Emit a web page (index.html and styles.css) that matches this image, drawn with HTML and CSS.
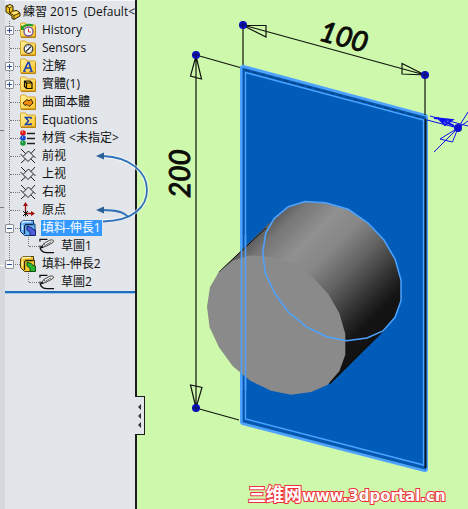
FILE: index.html
```html
<!DOCTYPE html>
<html lang="zh-Hant">
<head>
<meta charset="utf-8">
<title>練習 2015</title>
<link rel="stylesheet" href="styles.css">
</head>
<body>
<svg class="defs" aria-hidden="true">
  <defs>
    <linearGradient id="gold" x1="0" y1="0" x2="1" y2="1">
      <stop offset="0" stop-color="#fff3a0"/><stop offset="1" stop-color="#f8c526"/>
    </linearGradient>
    <symbol id="folder" viewBox="0 0 16 16">
      <path d="M.5 14.500V2Q.5 1 1.500 1H5.500L7 3H14.500Q15.500 3 15.500 4V14.500Z" fill="url(#gold)" stroke="#dba52a"/>
      <path d="M1 15.500H15.500V5" fill="none" stroke="#b9810e"/>
    </symbol>
    <symbol id="plane" viewBox="0 0 16 16">
      <path d="M8.500 3L13.500 8L8 13.500L3 8.500ZM1 1L5.800 5.800M10.800 10.800L15 15M15 1L11 5.500M5.500 11L1 15M3 8.500L.5 6M13.500 8L15.500 10" fill="none" stroke="#222" stroke-width="1"/>
    </symbol>
    <symbol id="sketch" viewBox="0 0 17 16">
      <path d="M9 1H1V3.500M1 7.500C1 12 3 15 8 15H16" fill="none" stroke="#111" stroke-width="1.300"/>
      <path d="M2.500 9.500L5 5.500L11.500 1.800Q14.500 .8 15.500 2.500L14.500 4.500L7 8.500Z" fill="#f7f7f7" stroke="#222" stroke-width=".9"/>
      <path d="M5 5.500L7 8.500M7 7L13 3.500" stroke="#333" stroke-width=".8"/>
      <path d="M1 11L3 7.500L5 9.500Z" fill="#111"/>
    </symbol>
  </defs>
</svg>
<div class="app">
  <aside class="panel">
    <div class="gutter"><i class="tick tick-a"></i><i class="tick tick-b"></i><i class="tick tick-c"></i></div>
    <nav class="tree">
      <div class="root">
        <svg class="icon" viewBox="0 0 16 16"><path d="M1 2L5 .5L8 2V7L12 6.500L15 9V12L9 15.500L7 14.500V12L1 8Z" fill="#f2c21c" stroke="#33290a"/><path d="M1 2L4.500 4V9L9 11.500L15 9M4.500 4L8 2M9 11.500V15M4.500 9L8 7" fill="none" stroke="#4b3a05"/><path d="M5 1.500L7 2.300L5 3.300L3 2.300ZM8.500 8L12 7.500L13 9L9 10.500L7 9Z" fill="#ffe985"/></svg>
        <span>練習 2015&nbsp; (Default&lt;</span>
      </div>
      <ul class="branch">
        <li><div class="row"><button class="toggle plus" aria-label="History"></button><svg class="icon" viewBox="0 0 16 16"><use href="#folder"/><circle cx="8.500" cy="9.500" r="4.500" fill="#fff" stroke="#7d55a5" stroke-width="1.400"/><path d="M8.500 6.500V10H11" fill="none" stroke="#d03030"/><path d="M2 6Q6 1 13 3.500" fill="none" stroke="#249a2c" stroke-width="2"/><path d="M1 3V8H5Z" fill="#249a2c"/></svg><span>History</span></div></li>
        <li><div class="row"><svg class="icon" viewBox="0 0 16 16"><use href="#folder"/><circle cx="8.500" cy="9" r="4.300" fill="#fff" stroke="#444" stroke-width="1.300"/><path d="M6 11.500L11 6.500" stroke="#333" stroke-width="1.500"/><path d="M6 7H7M8 6H9M10.500 10H11.500" stroke="#348ab0"/></svg><span>Sensors</span></div></li>
        <li><div class="row"><button class="toggle plus" aria-label="注解"></button><svg class="icon" viewBox="0 0 16 16"><use href="#folder"/><path d="M4 13L8 4.500H9L11.500 13M6 10H10.500" fill="none" stroke="#173cb4" stroke-width="1.600"/><path d="M3 13.300H6M9.500 13.300H13" stroke="#173cb4"/></svg><span>注解</span></div></li>
        <li><div class="row"><button class="toggle plus" aria-label="實體"></button><svg class="icon" viewBox="0 0 16 16"><use href="#folder"/><path d="M4.500 5H10L12 7V12.500H6.500L4.500 10.500ZM6.500 7H12M6.500 7V12.500M4.500 5L6.500 7" fill="#f5bd18" stroke="#171204" stroke-width="1.200"/></svg><span>實體(1)</span></div></li>
        <li><div class="row"><svg class="icon" viewBox="0 0 16 16"><use href="#folder"/><path d="M3 9L7 5.500L9 7L11 5L13 9L9 12.500L7 10.500L5 11.500Z" fill="#f38d0d" stroke="#3b2203"/></svg><span>曲面本體</span></div></li>
        <li><div class="row"><svg class="icon" viewBox="0 0 16 16"><use href="#folder"/><path d="M11 7V5.500H5.500L8.500 9L5.500 12.500H11V11" fill="none" stroke="#173cb4" stroke-width="1.500"/></svg><span>Equations</span></div></li>
        <li><div class="row"><svg class="icon" viewBox="0 0 16 16"><path d="M7 3.500H15M7 8.500H15M7 13.500H15" stroke="#222" stroke-width="1.400"/><circle cx="3" cy="3" r="2.800" fill="#e21717"/><circle cx="3" cy="8" r="2.800" fill="#174bd0"/><circle cx="3" cy="13" r="2.800" fill="#149a36"/><path d="M2 2H3M2 7H3M2 12H3" stroke="#fff"/></svg><span>材質 &lt;未指定&gt;</span></div></li>
        <li><div class="row"><svg class="icon"><use href="#plane"/></svg><span>前视</span></div></li>
        <li><div class="row"><svg class="icon"><use href="#plane"/></svg><span>上视</span></div></li>
        <li><div class="row"><svg class="icon"><use href="#plane"/></svg><span>右视</span></div></li>
        <li><div class="row"><svg class="icon" viewBox="0 0 16 16"><path d="M5.500 12V3M5.500 11.500H12" stroke="#a00c0c" stroke-width="1.300"/><path d="M5.500 0L8 4H3ZM15 11.500L11 9V14Z" fill="#a00c0c"/><path d="M3 9L8 14M8 9L3 14M5.500 8.500V14.500" stroke="#111"/></svg><span>原点</span></div></li>
        <li>
          <div class="row"><button class="toggle" aria-label="填料-伸長1"></button><svg class="icon" viewBox="0 0 16 16"><path d="M.5 3L3 .5H13.500V4H15V14L13 15.500H4.500L.5 11.500Z" fill="#67b3fa" stroke="#123b7a"/><path d="M2 3L3.500 1.500H11M2.500 5V10" fill="none" stroke="#d4edff" stroke-width="1.500"/><path d="M5 4.500H13.500M4.500 5V14" stroke="#10284d" stroke-width="1.300"/><path d="M7 6L11 7.500L14 10H15.500V15.500H10V12L7 10Z" fill="#4d5edc" stroke="#17216d"/></svg><span class="selected">填料-伸長1</span></div>
          <ul class="leafs"><li><div class="row"><svg class="icon"><use href="#sketch"/></svg><span>草圖1</span></div></li></ul>
        </li>
        <li>
          <div class="row"><button class="toggle" aria-label="填料-伸長2"></button><svg class="icon" viewBox="0 0 16 16"><path d="M.5 3L3 .5H13.500V4H14.500V14L13 15.500H4.500L.5 11.500Z" fill="#f7c832" stroke="#4d3905"/><path d="M2 3L3.500 1.500H11M2.500 5V10" fill="none" stroke="#fff4ab" stroke-width="1.500"/><path d="M5 4.500H13.500M4.500 5V14" stroke="#2f2404" stroke-width="1.300"/><path d="M7 6L11 7.500L14 10H15.500V15.500H10V12L7 10Z" fill="#2cb634" stroke="#0a5310"/></svg><span>填料-伸長2</span></div>
          <ul class="leafs"><li><div class="row"><svg class="icon"><use href="#sketch"/></svg><span>草圖2</span></div></li></ul>
        </li>
      </ul>
      <div class="rollback"></div>
    </nav>
    <svg class="links" viewBox="90 150 60 76" aria-hidden="true">
      <g fill="none" stroke="#fff" stroke-opacity=".6" stroke-width="4"><path d="M103 221C134 221 147 206 147 190C147 172 130 157 103 156"/></g>
      <g fill="none" stroke="#2e71b8" stroke-width="1.800"><path d="M103 221.500C134 221 147 206 147 190C147 172 130 157 103 156"/><path d="M128 217C125 213 117 210 103 210"/></g>
      <path d="M96 156L104 152.500V159.500ZM96 210L104 206.500V213.500Z" fill="#2b5f96"/>
    </svg>
    <button class="splitter" aria-label="Collapse panel"><i></i><i></i><i></i></button>
  </aside>
  <main class="view">
    <svg class="model" viewBox="137 0 331 509" role="img" aria-label="3D model">
      <defs>
        <linearGradient id="side" gradientUnits="userSpaceOnUse" x1="268" y1="224" x2="380" y2="336">
          <stop offset="0" stop-color="#5c5c5c"/><stop offset=".08" stop-color="#777"/><stop offset=".25" stop-color="#909090"/>
          <stop offset=".4" stop-color="#868686"/><stop offset=".58" stop-color="#606060"/><stop offset=".75" stop-color="#343434"/><stop offset=".88" stop-color="#151515"/><stop offset="1" stop-color="#111"/>
        </linearGradient>
        <path id="ring" d="M262.700 252.700L265.700 233.300L274.300 218.300L288.300 206.700L305 201.500L325.700 202.700L348.300 209.300L368 223L384 240L395 259L401 280V300.700L395 317.300L383 331L367 338L346.700 340.700L326.700 336.700L306 326.700L288.300 312L274.700 293.300L265.300 273.300Z"/>
      </defs>
      <path d="M243 68L425 117V469L243 422Z" fill="#005cb8" stroke="#4da3ff" stroke-width="6" stroke-linejoin="round"/>
      <path d="M243.500 69L425 117.500V468.500L243.500 421.500Z" fill="#005cb8" stroke="#0a57aa" stroke-width="2"/>
      <path d="M425.500 119V468" stroke="#07101c" stroke-width="2"/>
      <path d="M245 70L423 118" stroke="#053c7c" stroke-dasharray="5 3"/>
      <path d="M245.500 72.500L423.500 120V465L245.500 419Z" fill="none" stroke="#4da3ff" stroke-width="1.400"/>
      <path d="M274.300 218.300L219 272L330 384L385 330L401 300V280L368 223L325 203L288 207Z" fill="url(#side)"/>
      <use href="#ring" fill="url(#side)"/>
      <path d="M266 228L219 272M330 384L382 332" stroke="#111"/>
      <use href="#ring" fill="#8a8a8a" transform="translate(-55.700 54)"/>
      <use href="#ring" fill="none" stroke="#4da3ff" stroke-width="1.500"/>
      <path d="M241.500 235V390M245.500 235V390" stroke="#4da3ff" stroke-width="1.600"/>
      <g fill="none" stroke="#10140d" stroke-width="1.200">
        <path d="M243 25L425 75M243 25V65M425 75V115M243 25.500H266V37ZM425 75L402 63.500V74Z"/>
        <path d="M196 55V408M196 55L240 67.500M196 408L239 420M196 56L190.500 76L201.500 79ZM196 408L190.500 385L202 387.500Z"/>
      </g>
      <g fill="none" stroke="#0d12ee">
        <path d="M430 116L468 126M427 120L458 128M434 152L458 128L468 112M458 128L468 121M458 128L440 139L452.500 142Z"/>
        <path d="M434 118L452 120L445 125L438 118L454 126" stroke-width="2"/>
      </g>
      <g fill="#0b0fd0"><circle cx="243" cy="25" r="4"/><circle cx="425" cy="75" r="4"/><circle cx="196" cy="55" r="4"/><circle cx="196" cy="408" r="4"/><circle cx="458" cy="128" r="4"/></g>
      <g stroke="#11134a"><path d="M239 25H247M243 21V29M421 75H429M425 71V79M192 55H200M196 51V59M192 408H200M196 404V412"/></g>
      <text class="dim" transform="translate(318 40) rotate(15)">100</text>
      <text class="dim" transform="translate(190 198) rotate(-90)">200</text>
      <text class="mark" x="248" y="501"><tspan class="mark-cjk">三维网</tspan>www.3dportal.cn</text>
    </svg>
  </main>
</div>
</body>
</html>
```

FILE: styles.css
```css
* { box-sizing: border-box; }
body { margin: 0; background: #cef8ab; }
ul { list-style: none; margin: 0; padding: 0; }
.defs { position: absolute; width: 0; height: 0; }
.app { display: flex; min-height: 100vh; }

.panel {
  position: relative;
  display: flex;
  flex: none;
  width: 137px;
  background: #e2e5ea;
  border-right: 2px solid #1c1c1f;
  font: 12px/18px "Open Sans", "Noto Sans CJK TC", sans-serif;
  color: #111;
}
.gutter { position: relative; width: 5px; flex: none; background: #d5d8dd; }
.tick { position: absolute; left: 0; width: 4px; height: 1px; background: #77797d; }
.tick-a { top: 130px; }
.tick-b { top: 207px; }
.tick-c { top: 265px; background: #fff; }

.tree { flex: 1; min-width: 0; padding-top: 2px; border-top: 1px solid #f6f7f9; }
.root { display: flex; gap: 2px; height: 18px; align-items: center; overflow: hidden; white-space: pre; }
.row { position: relative; display: flex; align-items: center; gap: 6px; height: 18px; padding-left: 15px; white-space: nowrap; }
.row::before { content: ""; position: absolute; left: 5px; top: 9px; width: 10px; border-top: 1px dotted #777; }
.icon { flex: none; width: 16px; height: 16px; }
.branch { position: relative; }
.branch::before { content: ""; position: absolute; left: 4px; top: 0; bottom: 27px; border-left: 1px dotted #777; }
.leafs { position: relative; padding-left: 19px; }
.leafs::before { content: ""; position: absolute; left: 4px; top: 0; height: 9px; margin-left: 19px; border-left: 1px dotted #777; }
.selected { background: #3399ff; color: #fff; line-height: 16px; padding: 0 1px; margin-left: -1px; }

.toggle {
  position: absolute;
  left: 0;
  top: 5px;
  width: 9px;
  height: 9px;
  padding: 0;
  border: 1px solid #8f9399;
  border-radius: 1px;
  background: linear-gradient(#2f4c9c, #2f4c9c) center / 5px 1px no-repeat, #f8f9fb;
}
.toggle.plus {
  background:
    linear-gradient(#2f4c9c, #2f4c9c) center / 5px 1px no-repeat,
    linear-gradient(#2f4c9c, #2f4c9c) center / 1px 5px no-repeat,
    #f8f9fb;
}
.rollback { height: 3px; background: linear-gradient(#1d6fc4 2px, #a9c4e2 2px); }
.links { position: absolute; left: 90px; top: 150px; width: 60px; height: 76px; }

.splitter {
  position: absolute;
  left: 135px;
  top: 396px;
  display: flex;
  flex-direction: column;
  justify-content: center;
  align-items: center;
  gap: 3px;
  width: 10px;
  height: 39px;
  padding: 0;
  border: solid #1c1c1f;
  border-width: 1px 1px 1px 0;
  background: #e2e5ea;
}
.splitter i { border: solid transparent; border-width: 3px 3px 3px 0; border-right-color: #333; }

.view { flex: 1; min-width: 0; }
.model { display: block; width: 100%; height: auto; }
.dim { font: italic 28px Lato, sans-serif; fill: #0b0d08; stroke: #0b0d08; stroke-width: 1px; }
.mark { font: bold 15px "DejaVu Sans", sans-serif; fill: #fff; stroke: #ee3038; stroke-width: 2px; paint-order: stroke; }
.mark-cjk { font: bold 18px "Noto Sans CJK SC", sans-serif; }
```
